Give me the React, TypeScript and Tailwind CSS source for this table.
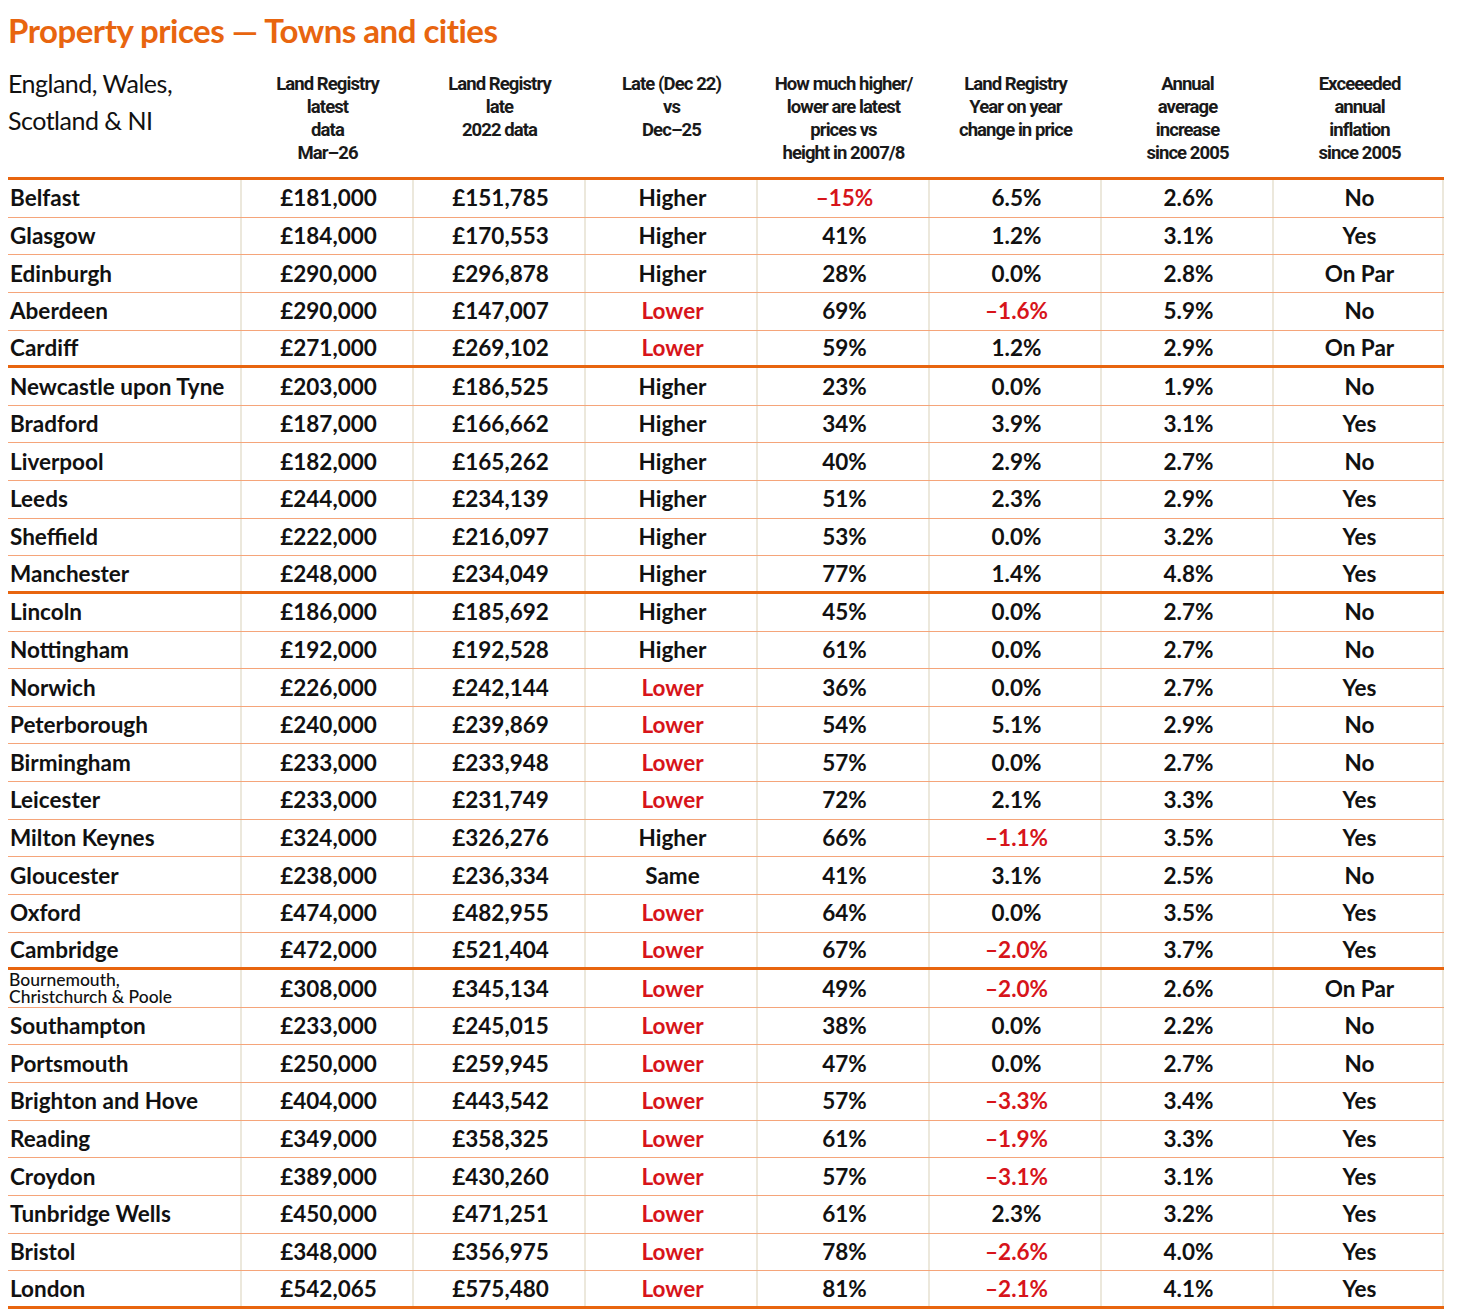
const rows: [string, string, string, string, string, string, string, string, boolean?][] = [
  ['Belfast', '£181,000', '£151,785', 'Higher', '–15%', '6.5%', '2.6%', 'No'],
  ['Glasgow', '£184,000', '£170,553', 'Higher', '41%', '1.2%', '3.1%', 'Yes'],
  ['Edinburgh', '£290,000', '£296,878', 'Higher', '28%', '0.0%', '2.8%', 'On Par'],
  ['Aberdeen', '£290,000', '£147,007', 'Lower', '69%', '–1.6%', '5.9%', 'No'],
  ['Cardiff', '£271,000', '£269,102', 'Lower', '59%', '1.2%', '2.9%', 'On Par', true],
  ['Newcastle upon Tyne', '£203,000', '£186,525', 'Higher', '23%', '0.0%', '1.9%', 'No'],
  ['Bradford', '£187,000', '£166,662', 'Higher', '34%', '3.9%', '3.1%', 'Yes'],
  ['Liverpool', '£182,000', '£165,262', 'Higher', '40%', '2.9%', '2.7%', 'No'],
  ['Leeds', '£244,000', '£234,139', 'Higher', '51%', '2.3%', '2.9%', 'Yes'],
  ['Sheffield', '£222,000', '£216,097', 'Higher', '53%', '0.0%', '3.2%', 'Yes'],
  ['Manchester', '£248,000', '£234,049', 'Higher', '77%', '1.4%', '4.8%', 'Yes', true],
  ['Lincoln', '£186,000', '£185,692', 'Higher', '45%', '0.0%', '2.7%', 'No'],
  ['Nottingham', '£192,000', '£192,528', 'Higher', '61%', '0.0%', '2.7%', 'No'],
  ['Norwich', '£226,000', '£242,144', 'Lower', '36%', '0.0%', '2.7%', 'Yes'],
  ['Peterborough', '£240,000', '£239,869', 'Lower', '54%', '5.1%', '2.9%', 'No'],
  ['Birmingham', '£233,000', '£233,948', 'Lower', '57%', '0.0%', '2.7%', 'No'],
  ['Leicester', '£233,000', '£231,749', 'Lower', '72%', '2.1%', '3.3%', 'Yes'],
  ['Milton Keynes', '£324,000', '£326,276', 'Higher', '66%', '–1.1%', '3.5%', 'Yes'],
  ['Gloucester', '£238,000', '£236,334', 'Same', '41%', '3.1%', '2.5%', 'No'],
  ['Oxford', '£474,000', '£482,955', 'Lower', '64%', '0.0%', '3.5%', 'Yes'],
  ['Cambridge', '£472,000', '£521,404', 'Lower', '67%', '–2.0%', '3.7%', 'Yes', true],
  ['Bournemouth, Christchurch & Poole', '£308,000', '£345,134', 'Lower', '49%', '–2.0%', '2.6%', 'On Par'],
  ['Southampton', '£233,000', '£245,015', 'Lower', '38%', '0.0%', '2.2%', 'No'],
  ['Portsmouth', '£250,000', '£259,945', 'Lower', '47%', '0.0%', '2.7%', 'No'],
  ['Brighton and Hove', '£404,000', '£443,542', 'Lower', '57%', '–3.3%', '3.4%', 'Yes'],
  ['Reading', '£349,000', '£358,325', 'Lower', '61%', '–1.9%', '3.3%', 'Yes'],
  ['Croydon', '£389,000', '£430,260', 'Lower', '57%', '–3.1%', '3.1%', 'Yes'],
  ['Tunbridge Wells', '£450,000', '£471,251', 'Lower', '61%', '2.3%', '3.2%', 'Yes'],
  ['Bristol', '£348,000', '£356,975', 'Lower', '78%', '–2.6%', '4.0%', 'Yes'],
  ['London', '£542,065', '£575,480', 'Lower', '81%', '–2.1%', '4.1%', 'Yes', true],
]

const headers = [
  ['Land Registry', 'latest', 'data', 'Mar–26'],
  ['Land Registry', 'late', '2022 data'],
  ['Late (Dec 22)', 'vs', 'Dec–25'],
  ['How much higher/', 'lower are latest', 'prices vs', 'height in 2007/8'],
  ['Land Registry', 'Year on year', 'change in price'],
  ['Annual', 'average', 'increase', 'since 2005'],
  ['Exceeeded', 'annual', 'inflation', 'since 2005'],
]

const isRed = (v: string) => v === 'Lower' || v.startsWith('–')

export default function App() {
  return (
    <div className="w-[1460px] h-[1315px] bg-white pl-2 pt-[9px] font-['Lato',sans-serif] text-[#111]">
      <h1 className="h-[42px] text-[33px] leading-[42px] font-bold tracking-[-0.015em] text-[#e8650f]">
        Property prices — Towns and cities
      </h1>

      {/* header */}
      <div className="grid w-[1436px] grid-cols-[232px_repeat(7,172px)] h-[129px] border-b-[3px] border-[#e8650f]">
        <div className="pt-[14px] text-[25px] leading-[37px] tracking-[-0.02em]">
          England, Wales,
          <br />
          Scotland &amp; NI
        </div>
        {headers.map((h, i) => (
          <div
            key={i}
            className="pt-[22px] pl-[3px] text-center text-[18.5px] leading-[23px] font-bold tracking-[-0.05em] font-['Roboto',sans-serif] text-[#1a1a1a]"
          >
            {h.map((line, j) => (
              <div key={j}>{line}</div>
            ))}
          </div>
        ))}
      </div>

      {/* rows */}
      {rows.map((r, i) => (
        <div
          key={i}
          className={`grid w-[1436px] grid-cols-[232px_repeat(7,172px)] h-[37.63px] ${
            r[8] ? 'border-b-[3px] border-[#e8650f]' : 'border-b border-[#f5a57a]'
          }`}
        >
          {r[0].includes(',') ? (
            <div className="flex flex-col justify-center pl-[1px] text-[17.5px] leading-[17.5px] font-medium">
              <span>Bournemouth,</span>
              <span>Christchurch &amp; Poole</span>
            </div>
          ) : (
            <div className="flex items-center pl-[2px] text-[22.5px] font-bold">{r[0]}</div>
          )}
          {r.slice(1, 8).map((v, j) => (
            <div
              key={j}
              className={`flex items-center justify-center pl-[3px] border-l-2 border-[#ece8dc] text-[22.5px] font-bold ${
                j === 6 ? 'border-r-2' : ''
              } ${isRed(v as string) ? 'text-[#d7141a]' : ''}`}
            >
              {v}
            </div>
          ))}
        </div>
      ))}
    </div>
  )
}
